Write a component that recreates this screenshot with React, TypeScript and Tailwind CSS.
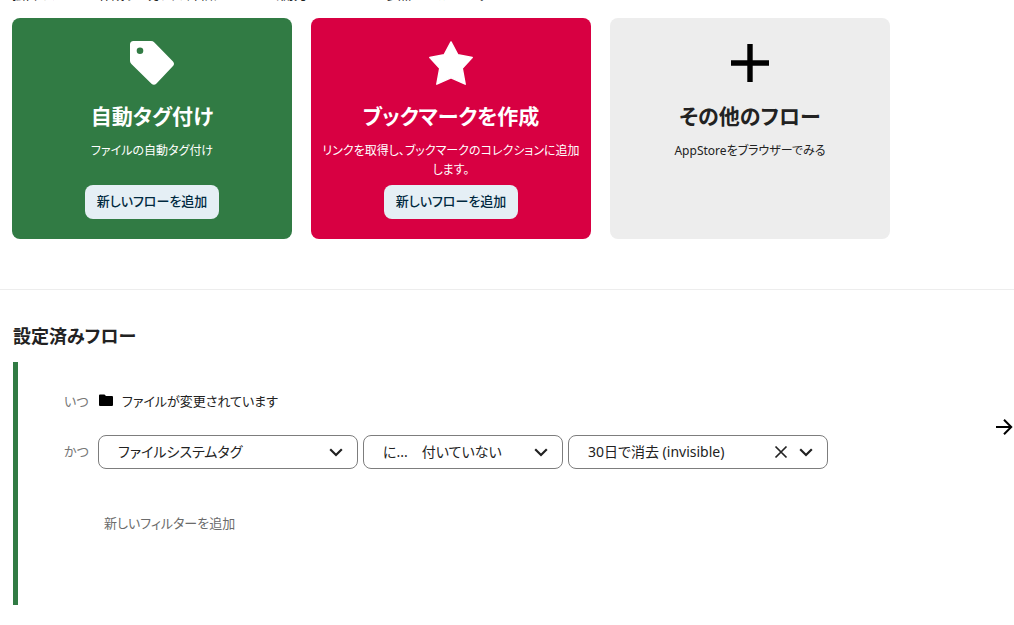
import React, { useState } from "react";
import type { ReactNode } from "react";

function TagIcon() {
  return (
    <svg viewBox="0 0 44 44" className="size-11" fill="#fff" aria-hidden="true">
      <path
        fillRule="evenodd"
        d="M3.5 0H21Q23 0 24.4 1.4L43 20.4Q45 22.8 43 25L26.5 42.5Q24 45 21.5 42.7L1.4 23Q0 21.6 0 20V3.5Q0 0 3.5 0ZM10 6.4a3.3 3.3 0 1 0 0 6.6a3.3 3.3 0 1 0 0-6.6Z"
      />
    </svg>
  );
}

function StarIcon() {
  return (
    <svg viewBox="0 0 44 44" className="size-11" fill="#fff" stroke="#fff" strokeWidth="1.4" strokeLinejoin="round" aria-hidden="true">
      <path d="M22 .9L28.9 13.8L43.2 16.5L33.3 27.4L36.2 43.2L22 36.8L7.8 43.2L10.7 27.4L.8 16.5L15.1 13.8Z" />
    </svg>
  );
}

function PlusIcon() {
  return (
    <svg viewBox="0 0 44 44" className="size-11" fill="#000" aria-hidden="true">
      <path d="M19.3 3h5.4v16.3H41v5.4H24.7V41h-5.4V24.7H3v-5.4H19.3Z" />
    </svg>
  );
}

function Chevron() {
  return (
    <svg viewBox="0 0 20 20" className="size-5" fill="none" stroke="#222" strokeWidth="2.2" aria-hidden="true">
      <path d="M4.2 7.2L10 13L15.800 7.2" />
    </svg>
  );
}

type CardProps = {
  icon: ReactNode;
  title: string;
  text: string;
  color: string;
  action?: string;
};

function Card({ icon, title, text, color, action }: CardProps) {
  return (
    <article className={`flex h-[221px] w-[280px] shrink-0 flex-col items-center rounded-lg px-2 pt-[23px] pb-5 text-center ${color}`}>
      {icon}
      <h3 className="mt-3 text-[21px] leading-[38px] font-bold">{title}</h3>
      <p className="mt-[6px] text-xs leading-[19px]">{text}</p>
      {action && (
        <button type="button" className="mt-auto h-[34px] shrink-0 rounded-lg bg-[#e5eff5] px-3 text-[13px] font-medium text-[#00293f]">
          {action}
        </button>
      )}
    </article>
  );
}

type PickerProps = { label: string; value: string; width: string; clearable?: boolean };

function Picker({ label, value, width, clearable }: PickerProps) {
  const [current, setCurrent] = useState(value);
  return (
    <div className={`relative h-[34px] ${width}`}>
      <select
        aria-label={label}
        value={current}
        onChange={(e) => setCurrent(e.target.value)}
        className="h-full w-full appearance-none rounded-lg border border-[#7d7d7d] bg-white pr-12 pl-[19px] text-sm text-[#222]"
      >
        <option value={value}>{value}</option>
        {clearable && <option value="" />}
      </select>
      <div className="pointer-events-none absolute inset-y-0 right-3 flex items-center gap-[5px]">
        {clearable && (
          <button type="button" aria-label="クリア" onClick={() => setCurrent("")} className="pointer-events-auto">
            <svg viewBox="0 0 20 20" className="size-5" stroke="#222" strokeWidth="1.7" aria-hidden="true">
              <path d="M4.5 4.5l11 11M15.5 4.5l-11 11" />
            </svg>
          </button>
        )}
        <Chevron />
      </div>
    </div>
  );
}

export default function App() {
  return (
    <main className="overflow-hidden bg-white font-['Noto_Sans','Noto_Sans_CJK_JP',sans-serif] text-[#222] [font-feature-settings:'palt']">
      <section className="border-b border-[#ededed] pb-[50px]">
        <p className="-mt-4 ml-3 text-[13px] leading-5">
          独自のフローを作成する方法の詳細については、開発ドキュメントを参照してください。
        </p>
        <div className="mt-[14px] ml-3 flex gap-[19px]">
          <Card icon={<TagIcon />} title="自動タグ付け" text="ファイルの自動タグ付け" color="bg-[#317b44] text-white" action="新しいフローを追加" />
          <Card
            icon={<StarIcon />}
            title="ブックマークを作成"
            text="リンクを取得し、ブックマークのコレクションに追加します。"
            color="bg-[#d80042] text-white"
            action="新しいフローを追加"
          />
          <Card icon={<PlusIcon />} title="その他のフロー" text="AppStoreをブラウザーでみる" color="bg-[#ededed] text-[#222]" />
        </div>
      </section>

      <section className="pt-[30px] pl-[13px]">
        <h2 className="text-lg leading-8 font-bold">設定済みフロー</h2>
        <div className="mt-[10px] flex h-[243px] items-start border-l-[5px] border-[#317b44]">
          <div className="flex-1 pt-6 pl-[46px] text-[13px]">
            <div className="flex h-8 items-center">
              <span className="w-[34px] text-[#767676]">いつ</span>
              <svg viewBox="0 0 16 16" className="mr-2 mb-1 size-4" fill="#000" aria-hidden="true">
                <path d="M2 2.5Q1 2.5 1 3.5V13Q1 14 2 14H14Q15 14 15 13V5Q15 4 14 4H8L6.5 2.5Z" />
              </svg>
              <span>ファイルが変更されています</span>
            </div>
            <div className="mt-[17px] flex items-center">
              <span className="w-[34px] text-[#767676]">かつ</span>
              <div className="flex gap-[5px]">
                <Picker label="フィルター" value="ファイルシステムタグ" width="w-[260px]" />
                <Picker label="条件" value="に...　付いていない" width="w-[200px]" />
                <Picker label="タグ" value="30日で消去 (invisible)" width="w-[260px]" clearable />
              </div>
            </div>
            <button type="button" className="mt-[38px] ml-10 h-[34px] text-[#6b6b6b]">
              新しいフィルターを追加
            </button>
          </div>
          <svg viewBox="0 0 18 18" className="mt-14 mr-px size-[18px]" fill="none" stroke="#000" strokeWidth="2" aria-hidden="true">
            <path d="M1 9H16M9 1.8L16.2 9L9 16.2" />
          </svg>
        </div>
      </section>
    </main>
  );
}
